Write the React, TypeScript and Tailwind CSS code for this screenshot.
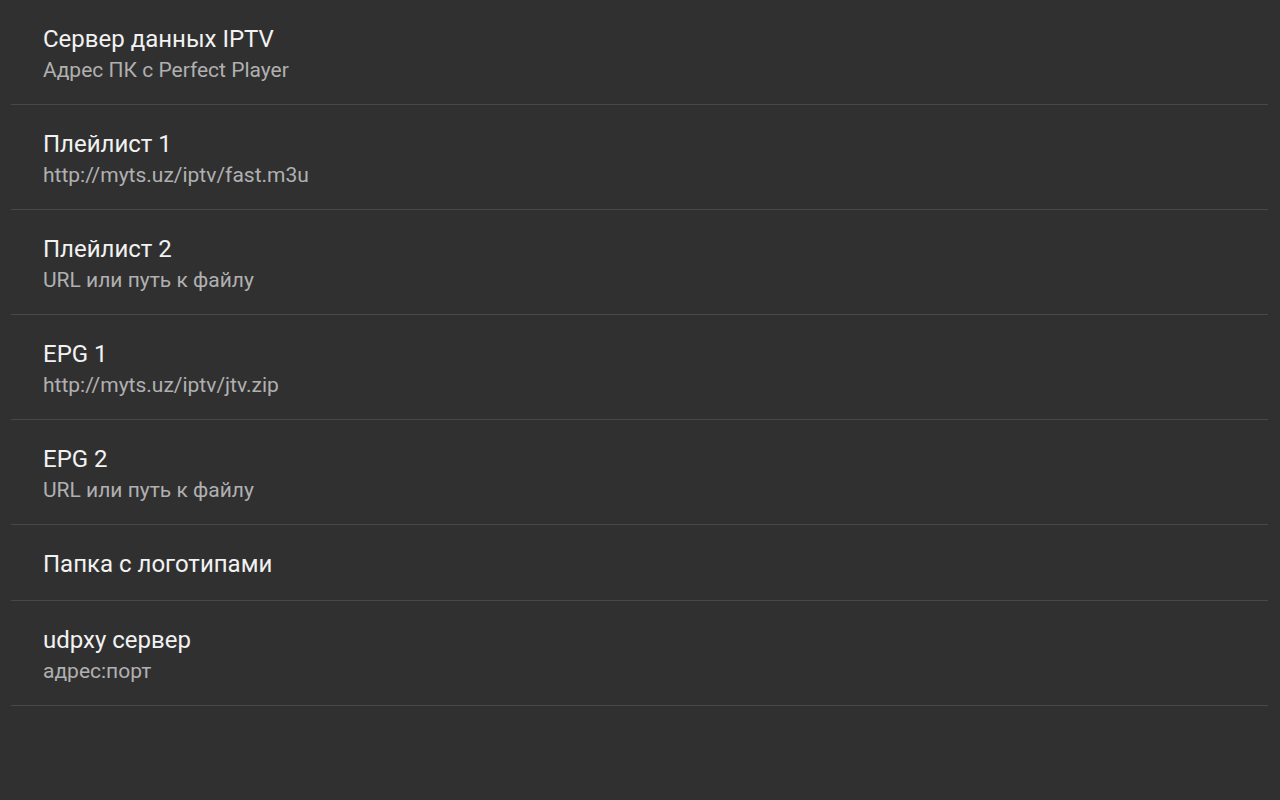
import React from "react";

const items: { title: string; sub?: string }[] = [
  { title: "Сервер данных IPTV", sub: "Адрес ПК с Perfect Player" },
  { title: "Плейлист 1", sub: "http://myts.uz/iptv/fast.m3u" },
  { title: "Плейлист 2", sub: "URL или путь к файлу" },
  { title: "EPG 1", sub: "http://myts.uz/iptv/jtv.zip" },
  { title: "EPG 2", sub: "URL или путь к файлу" },
  { title: "Папка с логотипами" },
  { title: "udpxy сервер", sub: "адрес:порт" },
];

export default function App() {
  return (
    <div
      className="w-[1280px] h-[800px] bg-[#303030] overflow-hidden"
      style={{ fontFamily: "Roboto, 'Noto Sans', sans-serif" }}
    >
      <div className="ml-[11px] mr-[12px] flex flex-col">
        {items.map((it, i) => (
          <div
            key={i}
            className={`border-b border-[#484848] pl-[32px] pt-[23px] flex flex-col ${
              it.sub ? "h-[105px]" : "h-[76px]"
            }`}
          >
            <div className="text-[24px] leading-[32px] text-[#f2f2f2]">{it.title}</div>
            {it.sub && (
              <div className="mt-[1px] text-[21px] leading-[28px] text-[#b0b0b0]">{it.sub}</div>
            )}
          </div>
        ))}
      </div>
    </div>
  );
}
